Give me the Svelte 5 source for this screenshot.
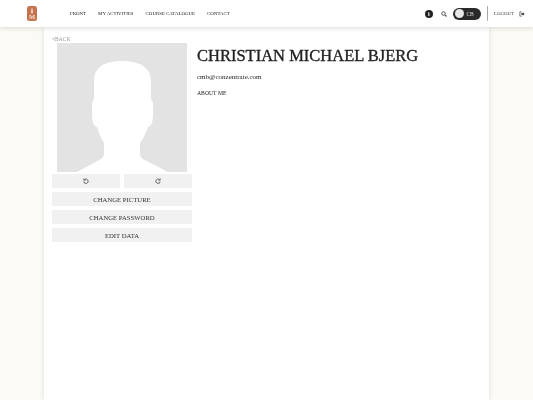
<script lang="ts">
  const nav = ['FRONT', 'MY ACTIVITIES', 'COURSE CATALOGUE', 'CONTACT'];
  const actions = ['CHANGE PICTURE', 'CHANGE PASSWORD', 'EDIT DATA'];
</script>

<header class="topbar">
  <div class="logo">
    <svg width="10" height="15" viewBox="0 0 10 15">
      <rect width="10" height="15" rx="2.5" fill="#c5744f" />
      <path d="M5 1.5 L5.8 4 V7.5 H4.2 V4 Z" fill="#f3dfd3" />
      <text x="5" y="13.2" text-anchor="middle" class="logo-m">M</text>
    </svg>
  </div>
  <nav>
    {#each nav as item}
      <span>{item}</span>
    {/each}
  </nav>
  <div class="tools">
    <span class="info">i</span>
    <svg class="search" width="6" height="6" viewBox="0 0 12 12">
      <circle cx="5" cy="5" r="3.5" fill="none" stroke="#555" stroke-width="2" />
      <path d="M8 8 L11 11" stroke="#555" stroke-width="2.2" />
    </svg>
    <div class="toggle">
      <span class="knob"></span>
      <span class="initials">CB</span>
    </div>
    <div class="divider"></div>
    <span class="logout">LOGOUT</span>
    <svg width="6" height="6" viewBox="0 0 14 14">
      <path d="M6 2 H2 V12 H6" fill="none" stroke="#555" stroke-width="1.8" />
      <path d="M5 5.5 H9 V3 L13 7 L9 11 V8.5 H5 Z" fill="#333" />
    </svg>
  </div>
</header>

<main class="card">
  <div class="back">&lt;BACK</div>
  <div class="columns">
    <aside>
      <div class="avatar">
        <svg width="130" height="129" viewBox="0 0 130 129">
          <path
            fill="#fff"
            d="M20 129 L44 116 Q47 114 47 111 L47 100 C44 96 42 90 40 84 C36 83 35 78 35 70 V62 C35 59 36 57 37 56 V38 C37 24 48 18 65 18 C82 18 94 24 94 38 V56 C95 57 96 59 96 62 V70 C96 78 95 83 91 84 C89 90 86 96 83 100 V111 Q83 114 86 116 L111 129 Z"
          />
        </svg>
      </div>
      <div class="rotate">
        <button aria-label="Rotate left">
          <svg width="6" height="6" viewBox="0 0 14 14">
            <path d="M3.5 4 A5 5 0 1 1 2 8" fill="none" stroke="#444" stroke-width="1.8" />
            <path d="M2 1 V5 H6" fill="none" stroke="#444" stroke-width="1.8" />
          </svg>
        </button>
        <button aria-label="Rotate right">
          <svg width="6" height="6" viewBox="0 0 14 14">
            <path d="M10.5 4 A5 5 0 1 0 12 8" fill="none" stroke="#444" stroke-width="1.8" />
            <path d="M12 1 V5 H8" fill="none" stroke="#444" stroke-width="1.8" />
          </svg>
        </button>
      </div>
      {#each actions as label}
        <button class="action">{label}</button>
      {/each}
    </aside>
    <section class="profile">
      <h1>CHRISTIAN MICHAEL BJERG</h1>
      <p class="email">cmb@conzentrate.com</p>
      <p class="about">ABOUT ME</p>
    </section>
  </div>
</main>

<style>
  :global(body) {
    margin: 0;
    background: #fbfaf5;
    font-family: "Liberation Serif", serif;
    color: #222;
    overflow: hidden;
  }

  .topbar {
    position: relative;
    z-index: 2;
    box-sizing: border-box;
    height: 27px;
    display: flex;
    align-items: center;
    padding: 0 8px 0 27px;
    background: #fff;
    box-shadow: 0 1px 5px rgba(0, 0, 0, 0.14);
    will-change: transform;
  }
  .logo { display: flex; width: 10px; }
  .logo-m { font: 700 6.5px "Liberation Serif", serif; fill: #f3dfd3; }

  nav {
    display: flex;
    gap: 12px;
    margin-left: 33px;
    font-size: 4.9px;
    color: #222;
    white-space: nowrap;
  }

  .tools {
    margin-left: auto;
    display: flex;
    align-items: center;
  }
  .info {
    width: 8px;
    height: 8px;
    border-radius: 50%;
    background: #222;
    color: #fff;
    font-size: 6px;
    font-weight: 700;
    line-height: 8px;
    text-align: center;
  }
  .search { margin-left: 8px; }
  .toggle {
    margin-left: 6.5px;
    box-sizing: border-box;
    width: 28px;
    height: 12px;
    border-radius: 6px;
    background: #2a2a2a;
    display: flex;
    align-items: center;
    padding: 0 2px;
    gap: 2px;
  }
  .knob { width: 9px; height: 9px; border-radius: 50%; background: #e8e8e8; }
  .initials { color: #ddd; font-size: 5.5px; }
  .divider { width: 1px; height: 15px; background: #aaa; margin: 0 6px 0 5.5px; }
  .logout { font-size: 4.9px; color: #444; margin-right: 5px; }

  .card {
    box-sizing: border-box;
    width: 445px;
    min-height: 373px;
    margin-left: 44px;
    padding: 9px 8px 0;
    background: #fff;
    box-shadow: 0 0 5px rgba(0, 0, 0, 0.12);
    will-change: transform;
  }
  .back { font-size: 5.5px; line-height: 7px; color: #999; }

  .columns { display: flex; gap: 5px; }

  aside { width: 140px; flex: none; }
  .avatar {
    width: 130px;
    height: 129px;
    margin: 0 auto;
    background: #e3e3e3;
  }
  .avatar svg { display: block; }

  button {
    border: 0;
    padding: 0;
    background: #f1f1f1;
    font-family: inherit;
    color: #333;
    display: flex;
    align-items: center;
    justify-content: center;
  }
  .rotate { display: flex; gap: 4px; margin-top: 2px; }
  .rotate button { flex: 1; height: 14px; }
  .action {
    width: 100%;
    height: 14px;
    margin-top: 4px;
    font-size: 6.7px;
  }

  .profile h1 {
    margin: 2px 0 0;
    font-size: 16.5px;
    line-height: 22px;
    font-weight: 400;
    -webkit-text-stroke: 0.35px #222;
    white-space: nowrap;
  }
  .email { margin: 6px 0 0; font-size: 7px; line-height: 9px; }
  .about { margin: 7px 0 0; font-size: 5.7px; line-height: 8px; }
</style>
